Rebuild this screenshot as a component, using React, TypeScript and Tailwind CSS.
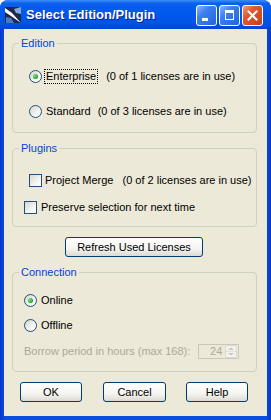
function Radio({ checked }: { checked?: boolean }) {
  return (
    <span className="flex h-[13px] w-[13px] shrink-0 items-center justify-center rounded-full border border-[#1c5180] bg-[linear-gradient(135deg,#d6d6ce_0%,#f4f4f0_60%,#ffffff_100%)]">
      {checked && (
        <span className="h-[5px] w-[5px] rounded-full bg-[radial-gradient(circle_at_35%_35%,#7fe07f,#1f9a1f_75%)]" />
      )}
    </span>
  );
}

function Check() {
  return (
    <span className="block h-[13px] w-[13px] shrink-0 border border-[#1c5180] bg-[linear-gradient(135deg,#d6d6ce_0%,#f4f4f0_60%,#ffffff_100%)]" />
  );
}

function Group({ title, className, children }: { title: string; className: string; children: React.ReactNode }) {
  return (
    <fieldset className={`rounded-[4px] border border-[#d0d0bf] ${className}`}>
      <legend className="ml-[6px] px-[2px] leading-[14px] text-[#0046d5]">{title}</legend>
      {children}
    </fieldset>
  );
}

function XpButton({ label, className }: { label: string; className: string }) {
  return (
    <div
      className={`flex h-[20px] items-center justify-center rounded-[3px] border border-[#003c74] bg-[linear-gradient(to_bottom,#ffffff_0%,#f4f4f0_60%,#dcdad0_100%)] leading-[14px] text-black ${className}`}
    >
      {label}
    </div>
  );
}

function TitleIcon() {
  return (
    <svg width="16" height="16" viewBox="0 0 16 16" className="mt-[7px] shrink-0">
      <rect x="0" y="0" width="16" height="16" fill="#1b2850" />
      <polygon points="0,1 7,6 16,16 6,9 0,5" fill="#ffffff" />
      <polygon points="9,2 16,0 16,7 11,6" fill="#7fa8e0" />
      <polygon points="1,10 6,11 9,16 1,16" fill="#4d79c4" />
    </svg>
  );
}

function WinButton({ kind }: { kind: 'min' | 'max' | 'close' }) {
  const bg =
    kind === 'close'
      ? 'bg-[linear-gradient(135deg,#f19a7c_0%,#e0582f_35%,#c8401c_100%)]'
      : 'bg-[linear-gradient(135deg,#8db4fa_0%,#3f7ff2_35%,#2262e0_100%)]';
  return (
    <div className={`h-[21px] w-[21px] rounded-[3px] border border-white ${bg}`}>
      <svg width="19" height="19" viewBox="0 0 19 19">
        {kind === 'min' && <rect x="5" y="12" width="6" height="3" fill="#fff" />}
        {kind === 'max' && (
          <g fill="none" stroke="#fff">
            <rect x="5.5" y="4.5" width="8" height="9" />
            <rect x="5" y="4" width="9" height="3" fill="#fff" stroke="none" />
          </g>
        )}
        {kind === 'close' && (
          <g stroke="#fff" strokeWidth="2" strokeLinecap="square">
            <line x1="5.5" y1="5.5" x2="13.5" y2="13.5" />
            <line x1="13.5" y1="5.5" x2="5.5" y2="13.5" />
          </g>
        )}
      </svg>
    </div>
  );
}

export default function App() {
  return (
    <div className="flex h-[420px] w-[271px] flex-col rounded-t-[8px] bg-[linear-gradient(to_right,#0838c8_0%,#0a4ee0_2%,#0a4ee0_98%,#0838c8_100%)] font-['Liberation_Sans',Arial,sans-serif] text-[11px] text-black">
      {/* Title bar */}
      <div className="flex h-[29px] shrink-0 items-start rounded-t-[8px] bg-[linear-gradient(to_bottom,#3d8ef8_0%,#0a5fee_12%,#0058ee_45%,#0054e6_80%,#0045d2_100%)] pl-[5px] pr-[8px]">
        <TitleIcon />
        <div className="ml-[5px] mt-[7px] text-[13px] font-bold leading-[16px] text-white [text-shadow:1px_1px_0_#0a1e86]">
          Select Edition/Plugin
        </div>
        <div className="ml-auto mt-[5px] flex gap-[2px]">
          <WinButton kind="min" />
          <WinButton kind="max" />
          <WinButton kind="close" />
        </div>
      </div>

      {/* Client area */}
      <div className="mx-[4px] mb-[4px] flex flex-1 flex-col bg-[#ece9d8]">
        <Group title="Edition" className="ml-[8px] mr-[10px] mt-[7px] pb-[13px]">
          <div className="mt-[18px] flex h-[16px] items-center pl-[16px]">
            <Radio checked />
            <span className="ml-[3px] px-[1px] leading-[13px] outline outline-1 outline-dotted outline-black">Enterprise</span>
            <span className="ml-[9px]">(0 of 1 licenses are in use)</span>
          </div>
          <div className="mt-[19px] flex h-[16px] items-center pl-[16px]">
            <Radio />
            <span className="ml-[4px]">Standard</span>
            <span className="ml-[7px]">(0 of 3 licenses are in use)</span>
          </div>
        </Group>

        <Group title="Plugins" className="ml-[8px] mr-[10px] mt-[8px] pb-[11px]">
          <div className="mt-[17px] flex h-[16px] items-center pl-[16px]">
            <Check />
            <span className="ml-[3px]">Project Merge</span>
            <span className="ml-[9px]">(0 of 2 licenses are in use)</span>
          </div>
          <div className="mt-[11px] flex h-[16px] items-center pl-[11px]">
            <Check />
            <span className="ml-[4px]">Preserve selection for next time</span>
          </div>
        </Group>

        <XpButton label="Refresh Used Licenses" className="ml-[61px] mt-[10px] w-[138px]" />

        <Group title="Connection" className="ml-[8px] mr-[10px] mt-[8px] pb-[12px]">
          <div className="mt-[13px] flex h-[16px] items-center pl-[11px]">
            <Radio checked />
            <span className="ml-[4px]">Online</span>
          </div>
          <div className="mt-[9px] flex h-[16px] items-center pl-[11px]">
            <Radio />
            <span className="ml-[4px]">Offline</span>
          </div>
          <div className="mt-[10px] flex h-[16px] items-center pl-[11px] text-[#aca899]">
            <span>Borrow period in hours (max 168):</span>
            <div className="ml-[8px] flex h-[15px] w-[41px] items-center border border-[#c9c7ba]">
              <span className="flex-1 pr-[3px] text-right leading-[13px]">24</span>
              <div className="mr-[1px] flex h-[13px] w-[12px] flex-col rounded-[2px] border border-[#dcdad0] bg-[#f3f2ec]">
                <svg width="10" height="11" viewBox="0 0 10 11">
                  <polygon points="2,4 5,1.5 8,4" fill="#c9c7ba" />
                  <line x1="0" y1="5.5" x2="10" y2="5.5" stroke="#e2e0d6" />
                  <polygon points="2,7 5,9.5 8,7" fill="#c9c7ba" />
                </svg>
              </div>
            </div>
          </div>
        </Group>

        <div className="mt-[10px] flex pl-[16px]">
          <XpButton label="OK" className="w-[62px]" />
          <XpButton label="Cancel" className="ml-[21px] w-[63px]" />
          <XpButton label="Help" className="ml-[20px] w-[62px]" />
        </div>
      </div>
    </div>
  );
}
